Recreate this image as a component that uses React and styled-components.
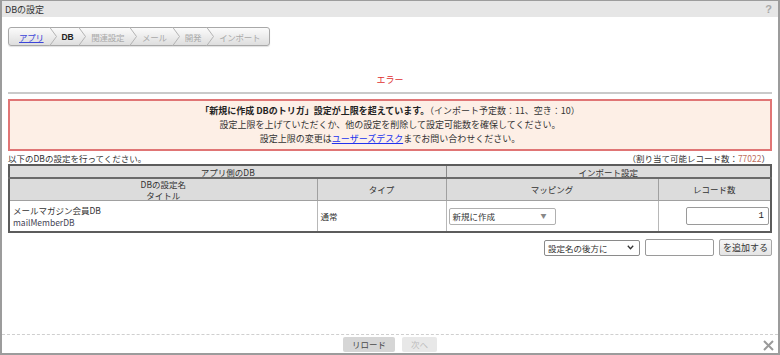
import React from 'react'
import styled, { createGlobalStyle } from 'styled-components'

const GlobalStyle = createGlobalStyle`
    html, body {
        margin: 0;
        padding: 0;
        background: #ffffff;
    }
    body {
        font-family: "Noto Sans CJK JP", "Noto Sans", sans-serif;
        font-size: 9px;
        color: #333;
    }
`;

const crumbs = [
    { label: 'アプリ', state: 'link' },
    { label: 'DB', state: 'current' },
    { label: '関連設定', state: 'off' },
    { label: 'メール', state: 'off' },
    { label: '開発', state: 'off' },
    { label: 'インポート', state: 'off' },
];

function Chevron() {
    return (
        <svg width="8" height="19" viewBox="0 0 8 19">
            <polyline points="0.5,0 7.5,9.5 0.5,19" fill="none" stroke="#b4b4b4" strokeWidth="1" />
        </svg>
    )
}

function App() {
    return (
        <>
            <GlobalStyle />
            <Window>
                <TitleBar>
                    <span>DBの設定</span>
                    <Help>?</Help>
                </TitleBar>
                <Body>
                    <Breadcrumb>
                        {crumbs.map((c, i) => (
                            <React.Fragment key={c.label}>
                                {i > 0 && <Chevron />}
                                <Crumb $state={c.state}>{c.label}</Crumb>
                            </React.Fragment>
                        ))}
                    </Breadcrumb>

                    <ErrorLabel>エラー</ErrorLabel>
                    <Rule />

                    <ErrorBox>
                        <div>
                            <strong>「新規に作成 DBのトリガ」設定が上限を超えています。</strong>
                            （インポート予定数：11、空き：10）
                        </div>
                        <div>設定上限を上げていただくか、他の設定を削除して設定可能数を確保してください。</div>
                        <div>設定上限の変更は<DeskLink>ユーザーズデスク</DeskLink>までお問い合わせください。</div>
                    </ErrorBox>

                    <InfoRow>
                        <span>以下のDBの設定を行ってください。</span>
                        <span>（割り当て可能レコード数：<Quota>77022</Quota>）</span>
                    </InfoRow>

                    <Table>
                        <colgroup>
                            <col style={{ width: 308 }} />
                            <col style={{ width: 129 }} />
                            <col style={{ width: 212 }} />
                            <col />
                        </colgroup>
                        <thead>
                            <tr>
                                <GroupHead colSpan={2}>アプリ側のDB</GroupHead>
                                <GroupHead colSpan={2}>インポート設定</GroupHead>
                            </tr>
                            <tr>
                                <HeadCell>DBの設定名<br />タイトル</HeadCell>
                                <HeadCell>タイプ</HeadCell>
                                <HeadCell>マッピング</HeadCell>
                                <HeadCell>レコード数</HeadCell>
                            </tr>
                        </thead>
                        <tbody>
                            <tr>
                                <Cell>
                                    メールマガジン会員DB<br />
                                    <Sub>mailMemberDB</Sub>
                                </Cell>
                                <Cell>通常</Cell>
                                <Cell>
                                    <Mapping>
                                        <span>新規に作成</span>
                                        <Caret>▼</Caret>
                                    </Mapping>
                                </Cell>
                                <CountCell>
                                    <CountInput defaultValue="1" readOnly />
                                </CountCell>
                            </tr>
                        </tbody>
                    </Table>

                    <AddRow>
                        <PlaceSelect>
                            <span>設定名の後方に</span>
                            <svg width="7" height="5" viewBox="0 0 7 5">
                                <polyline points="0.8,0.8 3.5,3.8 6.2,0.8" fill="none" stroke="#333" strokeWidth="1.3" />
                            </svg>
                        </PlaceSelect>
                        <NameInput readOnly />
                        <AddButton>を追加する</AddButton>
                    </AddRow>
                </Body>

                <Footer>
                    <FootButton>リロード</FootButton>
                    <FootButton $disabled>次へ</FootButton>
                    <Close>
                        <svg width="11" height="11" viewBox="0 0 11 11">
                            <path d="M1 1 L10 10 M10 1 L1 10" stroke="#9a9a9a" strokeWidth="2" />
                        </svg>
                    </Close>
                </Footer>
            </Window>
        </>
    )
}

export default App

const Window = styled.div`
    box-sizing: border-box;
    width: 780px;
    height: 355px;
    border: 2px solid #9c9c9c;
    border-top-width: 1px;
    display: flex;
    flex-direction: column;
    background: #fff;
    position: relative;
`;

const TitleBar = styled.div`
    height: 16px;
    background: #e6e6e6;
    display: flex;
    align-items: center;
    justify-content: space-between;
    padding: 0 6px 0 3px;
    font-size: 9px;
    color: #333;
`;

const Help = styled.span`
    color: #a8a8a8;
    font-family: "Liberation Sans", sans-serif;
    font-size: 11px;
    font-weight: bold;
`;

const Body = styled.div`
    padding: 10px 6px 0 6px;
    display: flex;
    flex-direction: column;
`;

const Breadcrumb = styled.div`
    align-self: flex-start;
    height: 19px;
    box-sizing: border-box;
    display: flex;
    align-items: center;
    gap: 5px;
    padding: 0 9px 0 10px;
    border: 1px solid #a8a8a8;
    border-radius: 3px;
    background: linear-gradient(#fbfbfb, #dedede);
    box-shadow: 0 1px 1px rgba(0, 0, 0, 0.12);
    font-size: 8.5px;
`;

const Crumb = styled.span`
    color: ${p => p.$state === 'link' ? '#3c45d8' : p.$state === 'current' ? '#222' : '#a9a9a9'};
    text-decoration: ${p => p.$state === 'link' ? 'underline' : 'none'};
    font-weight: ${p => p.$state === 'current' ? 'bold' : 'normal'};
    font-family: ${p => p.$state === 'current' ? '"Liberation Sans", sans-serif' : 'inherit'};
    letter-spacing: -0.3px;
`;

const ErrorLabel = styled.div`
    margin-top: 28px;
    text-align: center;
    color: #e03030;
    font-size: 9px;
    line-height: 12px;
`;

const Rule = styled.div`
    margin-top: 6px;
    height: 2px;
    background: #cacaca;
`;

const ErrorBox = styled.div`
    margin-top: 5px;
    border: 2px solid #e07575;
    background: #fdefe6;
    padding: 3px 0;
    text-align: center;
    font-size: 9px;
    line-height: 14px;
    color: #333;

    strong {
        color: #222;
    }
`;

const DeskLink = styled.span`
    color: #2233ee;
    text-decoration: underline;
`;

const InfoRow = styled.div`
    display: flex;
    justify-content: space-between;
    font-size: 8.5px;
    line-height: 12px;
    margin-top: 1px;
    padding-right: 2px;
`;

const Quota = styled.span`
    color: #c07060;
`;

const Table = styled.table`
    border-collapse: collapse;
    width: 100%;
    table-layout: fixed;
    border: 2px solid #5c5c5c;
    font-size: 8.5px;
`;

const GroupHead = styled.th`
    background: #dcdcdc;
    font-weight: normal;
    height: 11px;
    line-height: 10px;
    padding: 0;
    border: 1px solid #8a8a8a;
    border-bottom: 2px solid #6a6a6a;
    color: #333;
`;

const HeadCell = styled.th`
    background: #dcdcdc;
    font-weight: normal;
    height: 21px;
    line-height: 10.5px;
    padding: 0;
    border: 1px solid #a0a0a0;
    color: #333;
`;

const Cell = styled.td`
    height: 30px;
    padding: 0 3px;
    border: 1px solid #b8b8b8;
    line-height: 12px;
    vertical-align: middle;
    color: #333;
`;

const Sub = styled.span`
    color: #445;
`;

const CountCell = styled(Cell)`
    text-align: right;
    padding-right: 1px;
`;

const Mapping = styled.div`
    box-sizing: border-box;
    width: 107px;
    height: 17px;
    border: 1px solid #b0b0b0;
    border-radius: 2px;
    display: flex;
    align-items: center;
    justify-content: space-between;
    padding: 0 8px 0 3px;
    margin-left: -1px;
    background: #fff;
`;

const Caret = styled.span`
    font-size: 6px;
    color: #888;
`;

const CountInput = styled.input`
    box-sizing: border-box;
    width: 83px;
    height: 18px;
    border: 1px solid #9a9a9a;
    border-radius: 2px;
    text-align: right;
    padding: 0 4px;
    font-family: "Liberation Mono", monospace;
    font-size: 9px;
    color: #222;
    outline: none;
`;

const AddRow = styled.div`
    display: flex;
    justify-content: flex-end;
    align-items: center;
    gap: 5px;
    margin-top: 6px;
`;

const PlaceSelect = styled.div`
    box-sizing: border-box;
    width: 96px;
    height: 16px;
    border: 1px solid #8a8a8a;
    border-radius: 2px;
    display: flex;
    align-items: center;
    justify-content: space-between;
    padding: 0 5px 0 3px;
    font-size: 8.5px;
`;

const NameInput = styled.input`
    box-sizing: border-box;
    width: 69px;
    height: 17px;
    border: 1px solid #9a9a9a;
    border-radius: 2px;
    outline: none;
`;

const AddButton = styled.button`
    box-sizing: border-box;
    height: 17px;
    width: 53px;
    padding: 0;
    border: 1px solid #a5a5a5;
    border-radius: 2px;
    background: linear-gradient(#f6f6f6, #e4e4e4);
    font-family: inherit;
    font-size: 9px;
    color: #333;
`;

const Footer = styled.div`
    margin-top: auto;
    height: 18px;
    border-top: 1px dashed #cfcfcf;
    display: flex;
    justify-content: center;
    align-items: center;
    gap: 7px;
    position: relative;
`;

const FootButton = styled.button`
    box-sizing: border-box;
    height: 15px;
    min-width: 34px;
    padding: 0 9px;
    border: none;
    border-radius: 2px;
    background: ${p => p.$disabled ? '#e8e8e8' : '#d6d6d6'};
    color: ${p => p.$disabled ? '#bcbcbc' : '#4a4a4a'};
    font-family: inherit;
    font-size: 8.5px;
`;

const Close = styled.span`
    position: absolute;
    right: 4px;
    top: 5px;
    line-height: 0;
`;
